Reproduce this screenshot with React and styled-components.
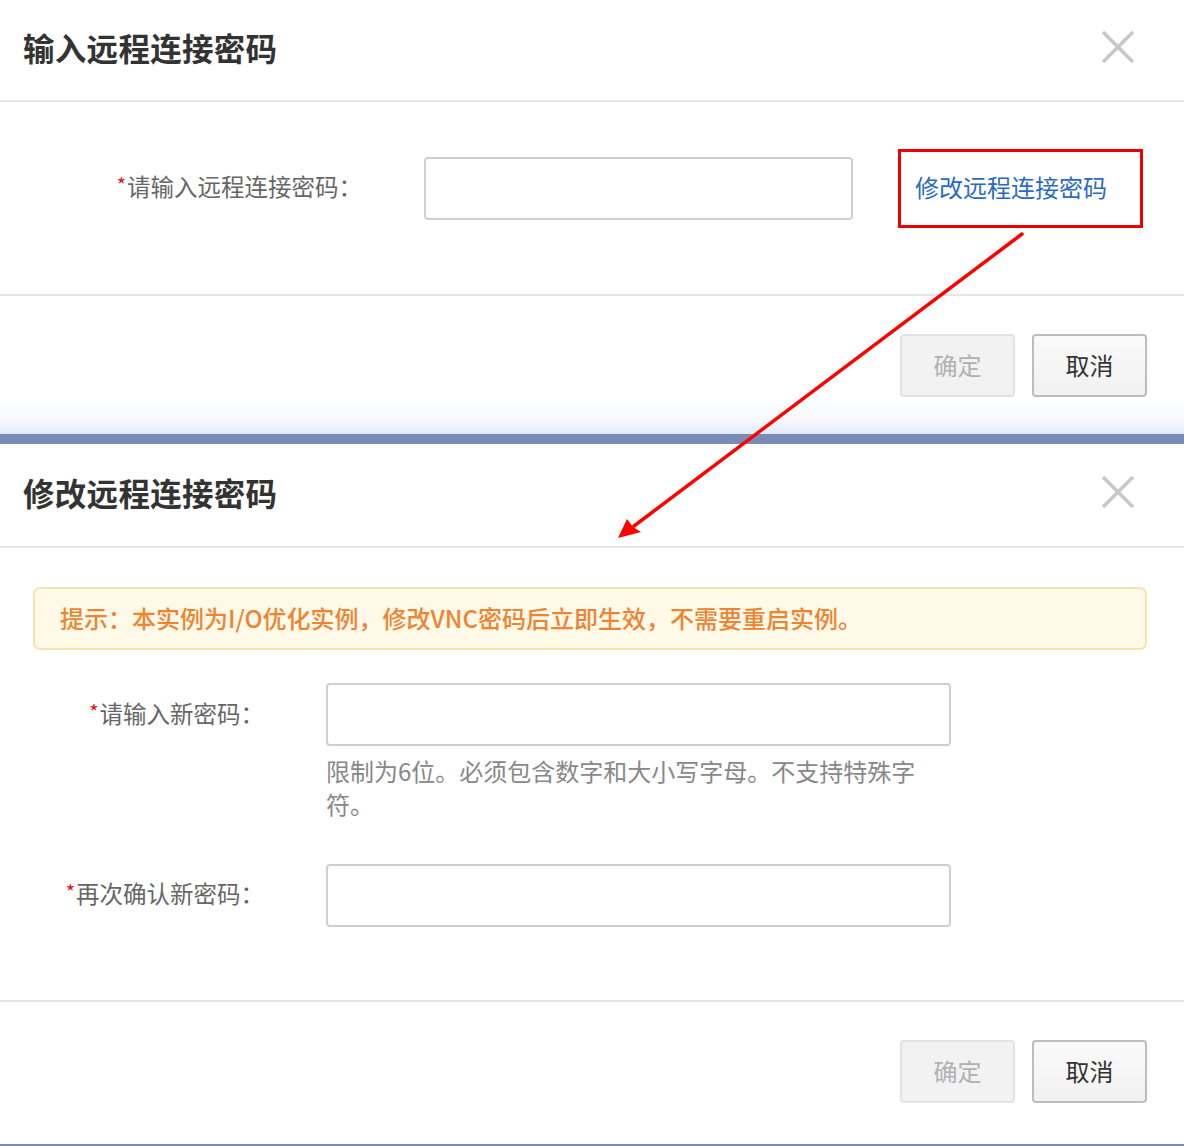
import React from "react";
import styled, { createGlobalStyle } from "styled-components";

const GlobalStyle = createGlobalStyle`
  body {
    margin: 0;
    background: #fff;
    font-family: "Noto Sans CJK SC", "Noto Sans", sans-serif;
    color: #333;
  }
`;

const Page = styled.div`
  position: relative;
  width: 1184px;
  height: 1146px;
  overflow: hidden;
  background: #fff;
`;

const Dialog = styled.div`
  display: flex;
  flex-direction: column;
  background: #fff;
`;

const Header = styled.div`
  height: ${(p) => p.h}px;
  display: flex;
  align-items: center;
  justify-content: space-between;
  padding: 0 48px 0 23px;
  border-bottom: 2px solid #e6e6e6;
  box-sizing: border-box;
`;

const Title = styled.h2`
  margin: -7px 0 0 0;
  font-size: 31.5px;
  font-weight: 700;
  color: #333;
  letter-spacing: 0.3px;
`;

const Close = styled.button`
  border: 0;
  padding: 0;
  background: none;
  width: 36px;
  height: 36px;
  margin-top: -6px;
  display: flex;
`;

const Body = styled.div`
  padding: ${(p) => p.pad};
  border-bottom: 2px solid #e6e6e6;
  display: flex;
  flex-direction: column;
`;

const Row = styled.div`
  display: grid;
  grid-template-columns: ${(p) => p.label}px ${(p) => p.input}px auto;
  column-gap: 62px;
  align-items: ${(p) => p.align || "center"};
  margin-top: ${(p) => p.mt || 0}px;
`;

const Label = styled.label`
  text-align: right;
  font-size: 23.5px;
  color: #666;
  line-height: 63px;
  margin-top: ${(p) => p.shift}px;
`;

const Star = styled.span`
  color: #e4101a;
  font-size: 20px;
  vertical-align: 3px;
  margin-right: 1px;
`;

const Field = styled.div`
  display: flex;
  flex-direction: column;
`;

const Input = styled.input`
  height: 63px;
  box-sizing: border-box;
  border: 2px solid #cfcfcf;
  border-radius: 4px;
  background: #fff;
  outline: none;
`;

const Help = styled.div`
  margin-top: 8px;
  width: 600px;
  font-size: 24px;
  line-height: 33px;
  color: #888;
`;

const LinkBox = styled.div`
  margin-left: -17px;
  width: 245px;
  height: 79px;
  box-sizing: border-box;
  border: 3px solid #ec0000;
  display: flex;
  align-items: center;
  padding: 0 0 4px 14px;
`;

const Link = styled.a`
  font-size: 24px;
  color: #2a6bbf;
  text-decoration: none;
`;

const Alert = styled.div`
  height: 63px;
  box-sizing: border-box;
  margin: 0 37px 0 33px;
  padding: 0 0 2px 25px;
  display: flex;
  align-items: center;
  background: #fffae8;
  border: 2px solid #f8e2b0;
  border-radius: 7px;
  color: #ee8433;
  font-size: 24px;
  font-weight: 500;
`;

const Footer = styled.div`
  height: ${(p) => p.h}px;
  display: flex;
  justify-content: flex-end;
  align-items: flex-start;
  gap: 17px;
  padding: 38px 37px 0 0;
  box-sizing: border-box;
`;

const Button = styled.button`
  width: 115px;
  height: 63px;
  border-radius: 4px;
  font-family: inherit;
  font-size: 24px;
  padding-bottom: 3px;
  border: 2px solid ${(p) => (p.disabled ? "#e3e3e3" : "#bdbdbd")};
  color: ${(p) => (p.disabled ? "#b0b0b0" : "#333")};
  background: ${(p) => (p.disabled ? "#f2f2f2" : "linear-gradient(#fafafa, #f1f1f1)")};
`;

const Divider = styled.div`
  height: 46px;
  background: linear-gradient(#fff 0%, #f6f8fd 50%, #e2e9f8 78%, #7a8cb5 78%, #7a8cb5 100%);
`;

const BottomLine = styled.div`
  height: 3px;
  background: #7a8cb5;
`;

const Overlay = styled.svg`
  position: absolute;
  left: 0;
  top: 0;
  pointer-events: none;
`;

const CloseIcon = () => (
  <svg width="36" height="36" viewBox="0 0 36 36">
    <path d="M3 3 L33 33 M33 3 L3 33" stroke="#c8c8c8" strokeWidth="3.6" />
  </svg>
);

const Required = ({ children, shift = -7 }) => (
  <Label shift={shift}>
    <Star>*</Star>
    {children}
  </Label>
);

export default function App() {
  return (
    <Page>
      <GlobalStyle />
      <Dialog>
        <Header h={102}>
          <Title>输入远程连接密码</Title>
          <Close><CloseIcon /></Close>
        </Header>
        <Body pad="47px 0 66px 0">
          <Row label={362} input={429}>
            <Required>请输入远程连接密码：</Required>
            <Input type="password" />
            <LinkBox>
              <Link href="#">修改远程连接密码</Link>
            </LinkBox>
          </Row>
        </Body>
        <Footer h={102}>
          <Button disabled>确定</Button>
          <Button>取消</Button>
        </Footer>
      </Dialog>
      <Divider />
      <Dialog>
        <Header h={104}>
          <Title>修改远程连接密码</Title>
          <Close><CloseIcon /></Close>
        </Header>
        <Body pad="39px 0 73px 0">
          <Alert>提示：本实例为I/O优化实例，修改VNC密码后立即生效，不需要重启实例。</Alert>
          <Row label={264} input={625} align="start" mt={33}>
            <Required shift={-3}>请输入新密码：</Required>
            <Field>
              <Input type="password" />
              <Help>限制为6位。必须包含数字和大小写字母。不支持特殊字符。</Help>
            </Field>
          </Row>
          <Row label={264} input={625} mt={44}>
            <Required>再次确认新密码：</Required>
            <Input type="password" />
          </Row>
        </Body>
        <Footer h={142}>
          <Button disabled>确定</Button>
          <Button>取消</Button>
        </Footer>
        <BottomLine />
      </Dialog>
      <Overlay width="1184" height="1146" viewBox="0 0 1184 1146">
        <line x1="1022" y1="234" x2="634" y2="526" stroke="#f00" strokeWidth="3.5" strokeLinecap="round" />
        <polygon points="618,538 627,519 633,527 641,532" fill="#f00" />
      </Overlay>
    </Page>
  );
}
